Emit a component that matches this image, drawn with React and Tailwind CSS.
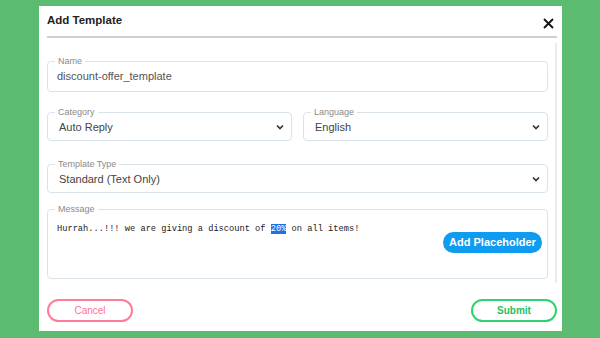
import React from "react";

function Chevron() {
  return (
    <svg width="8" height="6" viewBox="0 0 8 6" className="shrink-0">
      <path d="M1 1.5l3 3 3-3" fill="none" stroke="#333" strokeWidth="1.7" />
    </svg>
  );
}

function Field({ label, children, className = "" }) {
  return (
    <fieldset className={"border border-[#dbe3ea] rounded-[4px] px-[7px] " + className}>
      <legend className="px-[3px] text-[9px] leading-[10px] text-[#8a8a8a]">{label}</legend>
      {children}
    </fieldset>
  );
}

function SelectField({ label, value, className = "" }) {
  return (
    <Field label={label} className={className}>
      <div className="flex items-center justify-between h-[23px] pl-[4px] pr-[0px] pb-[3px]">
        <span className="text-[11px] text-[#444]">{value}</span>
        <Chevron />
      </div>
    </Field>
  );
}

export default function App() {
  return (
    <div
      className="w-[600px] h-[338px] bg-[#5bbb71] pt-[6px] pl-[39px]"
      style={{ fontFamily: "'Liberation Sans', Arial, sans-serif" }}
    >
      <div className="w-[523px] h-[325px] bg-white flex flex-col">
        <div className="flex items-center justify-between pl-2 pr-[8px] pt-[6px] h-[24px]">
          <span className="text-[11.5px] font-bold text-[#222]">Add Template</span>
          <svg width="11" height="11" viewBox="0 0 11 11" className="mt-[4px]">
            <path d="M1 1l9 9M10 1l-9 9" stroke="#111" strokeWidth="1.8" />
          </svg>
        </div>
        <div className="mt-[6px] ml-2 mr-[5px] h-[2px] bg-[#cfcfcf]" />
        <div className="flex flex-1">
          <div className="w-[501px] ml-2 flex flex-col">
            <Field label="Name" className="mt-[18px]">
              <div className="h-[25px] pl-[2px] pb-[4px] flex items-center text-[11px] text-[#555]">
                discount-offer_template
              </div>
            </Field>
            <div className="flex gap-[11px] mt-[15px]">
              <SelectField label="Category" value="Auto Reply" className="w-[245px]" />
              <SelectField label="Language" value="English" className="flex-1" />
            </div>
            <SelectField label="Template Type" value="Standard (Text Only)" className="mt-[18px]" />
            <Field label="Message" className="mt-[11px] h-[75px]">
              <div className="flex justify-between pl-[2px] pt-[9px]">
                <span
                  className="text-[8.7px] leading-[12px] text-[#222]"
                  style={{ fontFamily: "'Liberation Mono', 'Courier New', monospace" }}
                >
                  Hurrah...!!! we are giving a discount of{" "}
                  <span className="bg-[#1f6fe5] text-white">20%</span> on all items!
                </span>
                <button className="mt-[9px] mr-[-2px] h-[21px] w-[99px] rounded-full bg-[#0e9bf0] text-white text-[11px] font-bold">
                  Add Placeholder
                </button>
              </div>
            </Field>
          </div>
          <div className="ml-[7px] mt-[5px] w-[2px] h-[240px] bg-[#ececec]" />
        </div>
        <div className="flex justify-between pl-2 pr-[5px] pb-[9px]">
          <button className="w-[86px] h-[23px] rounded-full border-2 border-[#ff7b9b] text-[#ff6f90] text-[10px]">
            Cancel
          </button>
          <button className="w-[86px] h-[23px] rounded-full border-2 border-[#2fd170] text-[#25c060] text-[10px] font-bold">
            Submit
          </button>
        </div>
      </div>
    </div>
  );
}
